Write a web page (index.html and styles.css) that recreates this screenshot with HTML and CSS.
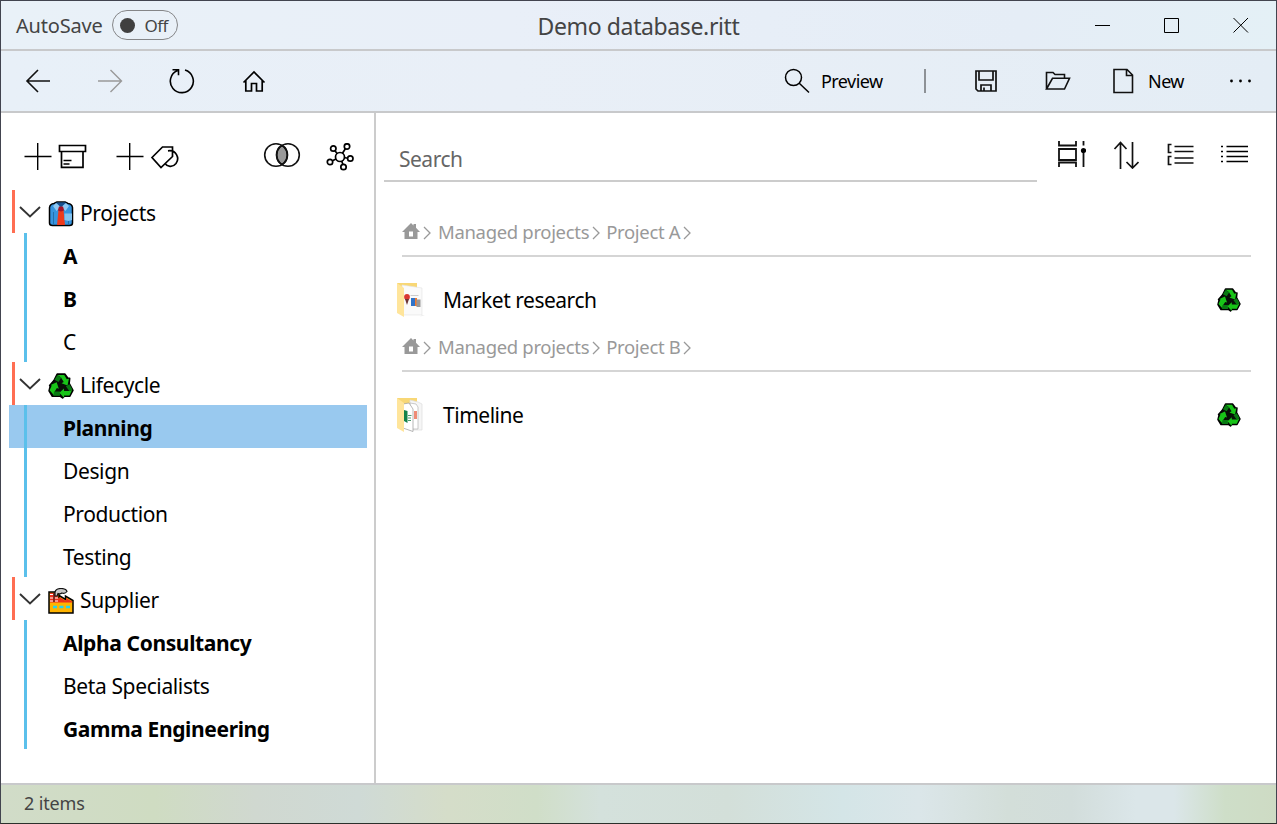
FILE: index.html
```html
<!DOCTYPE html>
<html lang="en">
<head>
<meta charset="utf-8">
<title>Demo database.ritt</title>
<link rel="stylesheet" href="styles.css">
</head>
<body>
<svg class="defs" width="0" height="0" aria-hidden="true">
  <symbol id="recycle" viewBox="0 0 24 24">
    <path d="M8.500 1h7l3 4h1.500l-.5 4.500 3.500 6.500-3 5.500h-5l-1.500 1.500-2-1.500H4L1 16.500l1-4-.5-1L5.500 7z" fill="#081008" stroke="#000" stroke-width="1.500" stroke-linejoin="round"/>
    <path d="M8.500 1.800h6.500l2.300 4 2-.6-1.300 6.300-5.500-2 2-1.300-2.500-4z" fill="#18c418"/>
    <path d="M8.500 2l3.800 2.200-2.600 4-3.700-2z" fill="#087a12"/>
    <path d="M2.500 11l5.500-2.500 2 6-1.800-.6-2 3.100-.7 3.500-4-4.500 2-4.500z" fill="#18c418"/>
    <path d="M5.500 17h5.500v4H5z" fill="#087a12"/>
    <path d="M10.500 18.300l4.300-4v2.200h5l2.400-.8-2.400 5h-5v2.200z" fill="#18c418"/>
    <path d="M16.500 12.300l3.300-2 2.700 5-2.700 1.500z" fill="#087a12"/>
  </symbol>
  <symbol id="chev" viewBox="0 0 22 14"><path d="M1 2l10 9.500L21 2" fill="none" stroke="#333" stroke-width="1.900"/></symbol>
  <symbol id="crumb" viewBox="0 0 8 14"><path d="M1 1l6 6-6 6" fill="none" stroke="#999" stroke-width="1.300"/></symbol>
  <symbol id="minihome" viewBox="0 0 18 17"><path d="M9 0l2.500 2.400V1H14v3.800L18 9h-2.500v7h-13V9H0zM7 8.500v5h4v-5z" fill="#999" fill-rule="evenodd"/></symbol>
</svg>
<div class="window">
  <header class="titlebar">
    <div class="autosave"><span class="autosave-label">AutoSave</span><span class="toggle"><i class="knob"></i><span class="off">Off</span></span></div>
    <h1 class="title"><span>Demo database.ritt</span></h1>
    <div class="controls">
      <svg width="16" height="16"><path d="M0 8.500h15" stroke="#000"/></svg>
      <svg width="16" height="16"><path d="M.5 1.500h14v14H.5z" fill="none" stroke="#000"/></svg>
      <svg width="16" height="16"><path d="M.5 1l14.500 14.500M15 1L.5 15.500" stroke="#000"/></svg>
    </div>
  </header>

  <nav class="toolbar">
    <div class="nav-left">
      <svg width="26" height="26" fill="none" stroke="#111" stroke-width="1.600"><path d="M25 13H2M13 2L2 13l11 11"/></svg>
      <svg width="26" height="26" fill="none" stroke="#999" stroke-width="1.400"><path d="M1 13h23M13.500 2l11 11-11 11"/></svg>
      <svg width="26" height="26" fill="none" stroke="#000" stroke-width="1.600"><path d="M16 2.100A11.500 11.500 0 1 1 8.500 2.500M3.500 1.800h6v5.500"/></svg>
      <svg width="26" height="26" fill="none" stroke="#000" stroke-width="1.700"><path d="M2.500 14.500L13 4l10.500 10.500M4.800 12.500V23h5.700v-7.500h5V23h5.700V12.500"/></svg>
    </div>
    <div class="nav-right">
      <div class="command preview"><svg width="26" height="26" fill="none" stroke="#000" stroke-width="1.500"><circle cx="9.500" cy="9.500" r="8"/><path d="M15 15l10 9.500"/></svg><span class="w-preview">Preview</span></div>
      <i class="divider"></i>
      <svg class="save" width="24" height="24" fill="none" stroke="#111" stroke-width="1.700"><path d="M2 2h20v20H4l-2-2zM5 2v9h14V2M7 22v-6h10v6M10 22v-3.500"/></svg>
      <svg class="open" width="26" height="22" fill="none" stroke="#111" stroke-width="1.600"><path d="M1.500 19V2.500H8l2 2h9.500v3.800M1.500 19L7.500 8.300h17L19.500 19z"/></svg>
      <div class="command new"><svg width="22" height="26" fill="none" stroke="#111" stroke-width="1.600"><path d="M1 1.500h13L19.500 7v17.500H1zM13.500 1.500v6h6"/></svg><span class="w-new">New</span></div>
      <svg class="more" width="24" height="6"><circle cx="2.500" cy="3" r="1.400"/><circle cx="11.500" cy="3" r="1.400"/><circle cx="20.500" cy="3" r="1.400"/></svg>
    </div>
  </nav>

  <main class="body">
    <aside class="sidebar">
      <div class="side-tools">
        <svg width="64" height="30" fill="none" stroke="#000" stroke-width="1.400"><path d="M.5 14.500h27M13.700 1v27"/><path d="M35.500 3.500h26v6h-26zM37.500 9.500v15.800h21.500V9.500M39.500 18.500h8M39.500 22h6" stroke-width="1.700"/></svg>
        <svg class="add-tag" width="64" height="30" fill="none" stroke="#000" stroke-width="1.400"><path d="M.5 14.500h27M13.700 1v27"/><path d="M36 15.500L46.500 5h10v9.500L45 25.500zM52 8.800C60 7.500 64 16 60 21.500 56.500 26 51 24.500 49 21.500" stroke-width="1.700"/></svg>
        <svg class="venn" width="38" height="26" stroke="#111" stroke-width="1.600" fill="none"><path d="M19 3.200a11.500 11.500 0 0 1 0 19.600 11.500 11.500 0 0 1 0-19.600" fill="#999"/><circle cx="13" cy="13" r="11.300"/><circle cx="25" cy="13" r="11.300"/></svg>
        <svg class="graph" width="28" height="28" fill="#fff" stroke="#000" stroke-width="1.700"><path d="M14 14L7.500 6M14 14l6.500-10M14 14l10 1.500M14 14L4 19M14 14l4 10"/><circle cx="14" cy="14" r="4.500"/><circle cx="7.300" cy="5.500" r="2.700"/><circle cx="21" cy="3.500" r="2.700"/><circle cx="24.300" cy="15.500" r="2.700"/><circle cx="4" cy="19" r="2.700"/><circle cx="17.500" cy="24" r="2.700"/></svg>
      </div>
      <ul class="tree">
        <li class="group"><svg class="chev"><use href="#chev"/></svg>
          <svg class="emoji" viewBox="0 0 26 26"><path d="M1.500 6.500Q2 3 6 2.500L9 1h8l3 1.500q4 .5 4.500 4V22q0 2.500-3 2.500H4.500q-3 0-3-2.500z" fill="#3694df" stroke="#000" stroke-width="1.500" stroke-linejoin="round"/><path d="M5.500 11v13M20.500 19v5" stroke="#246faa"/><path d="M8 1.500h10l-5 5z" fill="#174f8d"/><path d="M8 2l4.500 4-4 4L5 5zM18 2l-4.500 4 4 4L21 5z" fill="#8fc9f3"/><path d="M11 6h4l.5 3 1.500 15H9l1.500-15z" fill="#ee3a1c"/><path d="M11 5.500h4l1 4-3 1-3-1z" fill="#a31329"/><path d="M16.500 12.500H24V19l-3.500 1-4-1z" fill="#83c2ef"/></svg>
          <span class="label w-projects">Projects</span></li>
        <li class="leaf bold">A</li>
        <li class="leaf bold">B</li>
        <li class="leaf">C</li>
        <li class="group"><svg class="chev"><use href="#chev"/></svg><svg class="emoji"><use href="#recycle"/></svg><span class="label w-life">Lifecycle</span></li>
        <li class="leaf bold selected"><span class="w-planning">Planning</span></li>
        <li class="leaf"><span class="w-design">Design</span></li>
        <li class="leaf"><span class="w-production">Production</span></li>
        <li class="leaf"><span class="w-testing">Testing</span></li>
        <li class="group"><svg class="chev"><use href="#chev"/></svg>
          <svg class="emoji" viewBox="0 0 26 26"><path d="M1 25V4h10v5l1-1 5.500 3.500V8l7.500 4.500V25z" fill="#ffb300" stroke="#000" stroke-width="1.500"/><path d="M2 5h8v5.500l2-1 6 3.500v-3l6.200 3.500v1H2z" fill="#ed301c"/><path d="M2 6.500h3M7 6.500h3M2 10h3M7 10h3M2 13h3M7 13h3" stroke="#fff" stroke-width="1.200"/><path d="M6 4v10" stroke="#222"/><path d="M7 4q1-3.500 6-3.500 5 0 6 3-2 2.500-5 1.500-2 1.500-4 .5L9 8H7z" fill="#c8c8c8" stroke="#111" stroke-width="1.200"/><path d="M5 19h4M11.500 19h4M18 19h4" stroke="#28d4ed" stroke-width="2.700"/></svg>
          <span class="label w-supplier">Supplier</span></li>
        <li class="leaf bold"><span class="w-alpha">Alpha Consultancy</span></li>
        <li class="leaf"><span class="w-beta">Beta Specialists</span></li>
        <li class="leaf bold"><span class="w-gamma">Gamma Engineering</span></li>
      </ul>
    </aside>

    <section class="content">
      <div class="searchrow">
        <div class="search"><span class="w-search">Search</span></div>
        <div class="view-tools">
          <svg width="28" height="28" fill="none" stroke="#111" stroke-width="1.800"><path d="M1 0v4.500h17V0M1 8h17v11H1zM1 26v-4.500h17V26M25.500 0v4.500M25.500 12v14"/><circle cx="25.500" cy="9.500" r="2.600" fill="#000" stroke="none"/></svg>
          <svg width="26" height="28" fill="none" stroke="#111" stroke-width="1.700"><path d="M7.500 28V2M1.500 8l6-6.500 6 6.500M19.500 1v26M13.500 21l6 6 6-6"/></svg>
          <svg class="list-grouped" width="28" height="26" fill="none" stroke="#111" stroke-width="1.700"><path d="M4.500 2.500h-3v8h3M4.500 14.500h-3v8h3M7.500 4.500h19M7.500 9.500h19M7.500 16h19M7.500 21h19"/></svg>
          <svg class="list-flat" width="28" height="26" fill="none" stroke="#000" stroke-width="1.700"><path d="M5.500 4.500H27M5.500 9.500H27M5.500 14.500H27M5.500 19.500H27"/><path d="M0 4.500h2M0 9.500h2M0 14.500h2M0 19.500h2"/></svg>
        </div>
      </div>

      <div class="result">
        <div class="crumbs"><svg class="mini"><use href="#minihome"/></svg><svg class="arrow"><use href="#crumb"/></svg><span class="c1">Managed projects</span><svg class="arrow"><use href="#crumb"/></svg><span class="c2">Project A</span><svg class="arrow"><use href="#crumb"/></svg></div>
        <div class="item">
          <svg width="30" height="36"><path d="M1 1h20v30H7z" fill="#f8d775"/><path d="M6 3l20 3v27H7z" fill="#fafafa" stroke="#e2e2e2" stroke-width=".6"/><path d="M26 33l3 .5-5 1" fill="#eee"/><path d="M1 1l7 5v29l-7-4z" fill="#ffe59b"/><path d="M14.500 13.500h8" stroke="#ccc"/><path d="M15 16h4v8h-4z" fill="#2f73c9"/><path d="M19 16h2v8h-2z" fill="#ed7a31"/><path d="M20.500 17.500h4V25h-4z" fill="#999"/><circle cx="11" cy="15" r="2.900" fill="#d93731"/><path d="M9 17h4l-2 6z" fill="#6c3434"/></svg>
          <span class="name w-market">Market research</span><svg class="tag"><use href="#recycle"/></svg>
        </div>
      </div>
      <div class="result">
        <div class="crumbs"><svg class="mini"><use href="#minihome"/></svg><svg class="arrow"><use href="#crumb"/></svg><span class="c1">Managed projects</span><svg class="arrow"><use href="#crumb"/></svg><span class="c2">Project B</span><svg class="arrow"><use href="#crumb"/></svg></div>
        <div class="item">
          <svg width="30" height="36"><path d="M1 1h20v30H7z" fill="#f8d775"/><path d="M14 3l8 2 4 2v26H14z" fill="#f6f6f6" stroke="#ddd" stroke-width=".7"/><path d="M14 6l6 1 2 3v22h-8z" fill="#fff" stroke="#aaa" stroke-width=".6"/><path d="M18 14h3v8h-3z" fill="#ef8b76"/><path d="M7 7l6-1 4 6v22.500L7 31z" fill="#fff" stroke="#999" stroke-width=".7"/><path d="M1 1l7 5v29l-7-4z" fill="#ffe59b"/><path d="M8 13l3.500 1v12L8 24z" fill="#12824a"/><path d="M12 18.500h3.500M12 21h3M12 23.500h3" stroke="#4a9c70" stroke-width="1.200"/></svg>
          <span class="name w-timeline">Timeline</span><svg class="tag"><use href="#recycle"/></svg>
        </div>
      </div>
    </section>
  </main>
  <footer class="status"><span class="w-items">2 items</span></footer>
</div>
</body>
</html>
```
FILE: styles.css
```css
* { box-sizing: border-box; }
body { margin: 0; font-family: "Noto Sans", "Open Sans", sans-serif; color: #000; overflow: hidden; }
svg { display: block; flex: none; }
.defs { position: absolute; }
span { white-space: nowrap; }
.window { width: 1277px; height: 824px; border: 1px solid #42444f; border-bottom-color: #2b302b; display: grid; grid-template-rows: 50px 62px 672px 38px; background: #fff; }
.titlebar { display: grid; grid-template-columns: 400px 1fr 400px; align-items: center; border-bottom: 2px solid #c8c9cb; background: linear-gradient(90deg, #e9f1f8, #e9eff8 40%, #e5edf6 80%, #e4f0f6); color: #444; }
.autosave { display: flex; align-items: center; gap: 9px; padding-left: 15px; }
.autosave-label { font-size: 20px; line-height: 28px; padding-top: 2px; letter-spacing: -.2px; }
.toggle { width: 66px; height: 30px; border: 1.500px solid #858688; border-radius: 15px; display: flex; align-items: center; gap: 10px; padding-left: 7px; }
.knob { width: 15px; height: 15px; border-radius: 50%; background: #404040; }
.off { font-size: 17px; letter-spacing: -.5px; }
.title { margin: 0; font-size: 23px; font-weight: 400; text-align: center; line-height: 30px; padding-top: 2px; letter-spacing: -.38px; }
.controls { display: flex; justify-content: flex-end; gap: 53px; padding-right: 27px; }
.toolbar { display: flex; justify-content: space-between; align-items: center; border-bottom: 2px solid #c8c9cb; background: linear-gradient(90deg, #e8f0f8, #e9eff7 40%, #e4edf5); }
.nav-left { display: flex; gap: 46px; padding-left: 24px; }
.nav-right { display: flex; align-items: center; }
.command { display: flex; align-items: center; font-size: 18px; }
.preview { gap: 11px; width: 140px; letter-spacing: -.55px; }
.divider { width: 2px; height: 24px; background: #8d9196; }
.save { margin-left: 48px; }
.open { margin-left: 47px; }
.new { margin-left: 42px; gap: 13px; width: 116px; letter-spacing: -.55px; }
.more { margin-right: 23px; }
.body { display: grid; grid-template-columns: 375px 1fr; border-bottom: 2px solid #c8c9cb; }
.sidebar { border-right: 2px solid #ccc; }
.side-tools { height: 77px; padding: 29px 0 0 23px; display: flex; }
.add-tag { margin-left: 28px; }
.venn { margin-left: 83px; }
.graph { margin: 1px 0 0 25px; }
.tree { margin: 0; padding: 0; list-style: none; font-size: 21px; line-height: 42px; letter-spacing: -.37px; }
.group { height: 43px; display: flex; align-items: center; margin-left: 11px; border-left: 3px solid #ff6e52; padding-left: 4px; }
.chev { width: 22px; height: 14px; margin-top: 1px; }
.emoji { width: 26px; height: 26px; margin: 4px 6px 0 7px; }
.leaf { height: 43px; margin: 0 7px 0 8px; padding-left: 54px; padding-top: 2px; background: linear-gradient(#5bc0eb, #5bc0eb) 15px 0 / 3px 43px no-repeat; }
.selected { background-color: #99c9ef; }
.bold { font-weight: 700; }
.label { padding-top: 2px; }
.content { padding-left: 8px; }
.searchrow { display: flex; height: 69px; }
.search { width: 653px; border-bottom: 2px solid #ccc; color: #666; font-size: 21px; line-height: 30px; letter-spacing: -.5px; padding: 31px 0 0 15px; }
.view-tools { display: flex; gap: 27px; padding: 28px 0 0 21px; }
.list-grouped { margin: 1px -1px 0 1px; }
.list-flat { margin-top: 1px; }
.result { height: 115px; }
.searchrow + .result { margin-top: 28px; }
.crumbs { display: flex; align-items: center; height: 47px; margin: 0 25px 0 18px; padding-bottom: 3px; border-bottom: 2px solid #d5d5d5; color: #999; font-size: 18.500px; letter-spacing: -.33px; }
.mini { width: 18px; height: 17px; }
.arrow { width: 8px; height: 14px; margin: 4px 0 0 3px; }
.c1 { margin-left: 7px; }
.c2 { margin-left: 6px; }
.item { height: 68px; display: flex; align-items: center; padding: 17px 35px 0 12px; font-size: 21px; letter-spacing: -.48px; }
.name { margin-left: 17px; margin-top: 1px; flex: 1; }
.tag { width: 24px; height: 24px; margin-top: 1px; }
.status { display: flex; align-items: center; padding: 0 0 2px 23px; color: #444; font-size: 18px; letter-spacing: -.15px; background: linear-gradient(90deg, #d1dcc8 0, #cfdcc2 12%, #d0d8d0 20%, #cfdad6 28%, #d5ddc9 35%, #d0dec8 42%, #d4e1dc 47%, #d3dfd9 57%, #d4e5e7 66%, #dbe6e9 72%, #d3ded9 79%, #d2dddb 84%, #dbe6e9 89%, #dbe6e9 92%, #cedec8 96%, #cedbc4); }
```
